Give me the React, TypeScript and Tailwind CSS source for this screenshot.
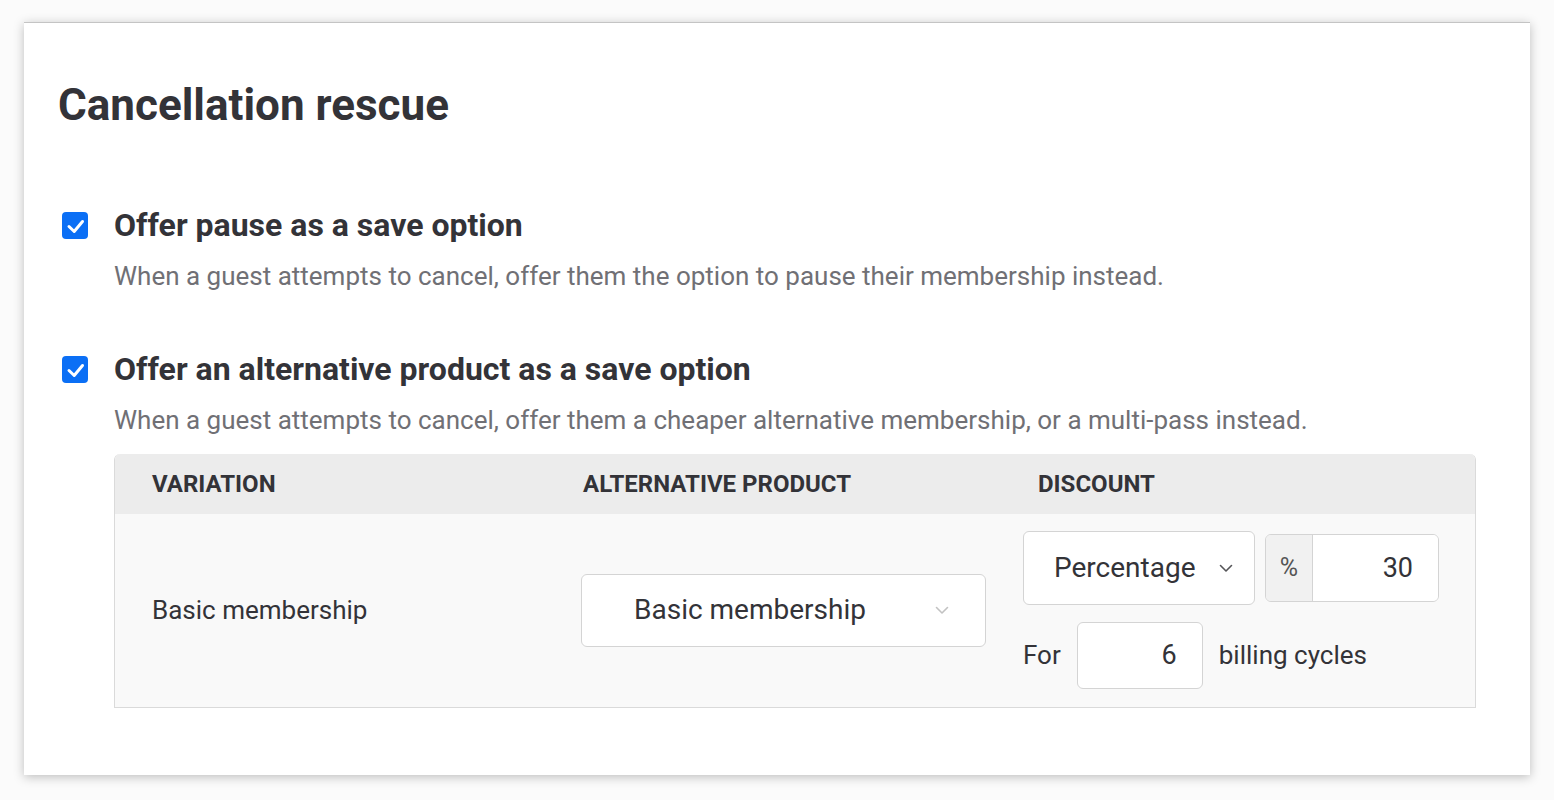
import React from 'react';

const Check: React.FC = () => (
  <div className="w-[26px] h-[27px] rounded-[4px] bg-[#0b6ff5] shrink-0">
    <svg width="26" height="27" viewBox="0 0 26 27" fill="none">
      <path d="M7 14.5 L12.2 19.5 L20.5 9.5" stroke="white" strokeWidth="3" strokeLinecap="round" strokeLinejoin="round" />
    </svg>
  </div>
);

const Chevron: React.FC<{ color: string }> = ({ color }) => (
  <svg width="14" height="9" viewBox="0 0 14 9" fill="none">
    <path d="M1.5 1.5 L7 7 L12.5 1.5" stroke={color} strokeWidth="1.6" strokeLinecap="round" strokeLinejoin="round" />
  </svg>
);

const Option: React.FC<{ title: string; text: string }> = ({ title, text }) => (
  <div className="flex flex-col">
    <div className="flex items-center gap-[26px] pl-[38px]">
      <Check />
      <div className="text-[32px] font-bold text-[#333338] leading-[40px]">{title}</div>
    </div>
    <div className="pl-[90px] mt-[14px] text-[26px] text-[#707075] leading-[34px]">{text}</div>
  </div>
);

const App: React.FC = () => {
  return (
    <div className="min-h-[800px] bg-[#fbfbfb] pt-[22px] pl-[24px]" style={{ fontFamily: 'Roboto, "Liberation Sans", sans-serif' }}>
      <div className="w-[1506px] h-[753px] bg-white border-t border-[#c4c4c4] shadow-[0_2px_10px_rgba(0,0,0,0.25)]">
        <h1 className="pl-[34px] pt-[56px] text-[44px] font-bold text-[#333338] leading-[52px]">Cancellation rescue</h1>
        <div className="mt-[74px]">
          <Option title="Offer pause as a save option" text="When a guest attempts to cancel, offer them the option to pause their membership instead." />
        </div>
        <div className="mt-[56px]">
          <Option
            title="Offer an alternative product as a save option"
            text="When a guest attempts to cancel, offer them a cheaper alternative membership, or a multi-pass instead."
          />
        </div>
        <div className="ml-[90px] mt-[17px] w-[1362px] rounded-t-[6px] border-l border-r border-b border-[#dadada] overflow-hidden">
          <div className="grid grid-cols-[466px_442px_1fr] h-[60px] items-center bg-[#ececec] text-[24px] font-bold text-[#333338]">
            <div className="pl-[37px]">VARIATION</div>
            <div className="pl-[2px]">ALTERNATIVE PRODUCT</div>
            <div className="pl-[15px]">DISCOUNT</div>
          </div>
          <div className="grid grid-cols-[466px_442px_1fr] items-center bg-[#f9f9f9] pt-[17px] pb-[18px] text-[26px] text-[#333338]">
            <div className="pl-[37px]">Basic membership</div>
            <div>
              <div className="w-[405px] h-[73px] bg-white border border-[#d4d4d4] rounded-[6px] flex items-center justify-between pl-[52px] pr-[36px] text-[28px]">
                <span>Basic membership</span>
                <Chevron color="#c2c2c2" />
              </div>
            </div>
            <div className="flex flex-col gap-[17px]">
              <div className="flex items-center gap-[10px]">
                <div className="w-[232px] h-[74px] bg-white border border-[#d4d4d4] rounded-[6px] flex items-center justify-between pl-[30px] pr-[21px] text-[28px]">
                  <span>Percentage</span>
                  <Chevron color="#555558" />
                </div>
                <div className="flex h-[68px] w-[174px] border border-[#d4d4d4] rounded-[6px] overflow-hidden">
                  <div className="w-[47px] bg-[#f1f1f1] border-r border-[#d4d4d4] flex items-center justify-center text-[25px] text-[#555]">%</div>
                  <div className="flex-1 bg-white flex items-center justify-end pr-[25px] text-[27px]">30</div>
                </div>
              </div>
              <div className="flex items-center">
                <span>For</span>
                <div className="ml-[16px] w-[126px] h-[67px] bg-white border border-[#d4d4d4] rounded-[6px] flex items-center justify-end pr-[25px] text-[27px]">6</div>
                <span className="ml-[16px]">billing cycles</span>
              </div>
            </div>
          </div>
        </div>
      </div>
    </div>
  );
};

export default App;
